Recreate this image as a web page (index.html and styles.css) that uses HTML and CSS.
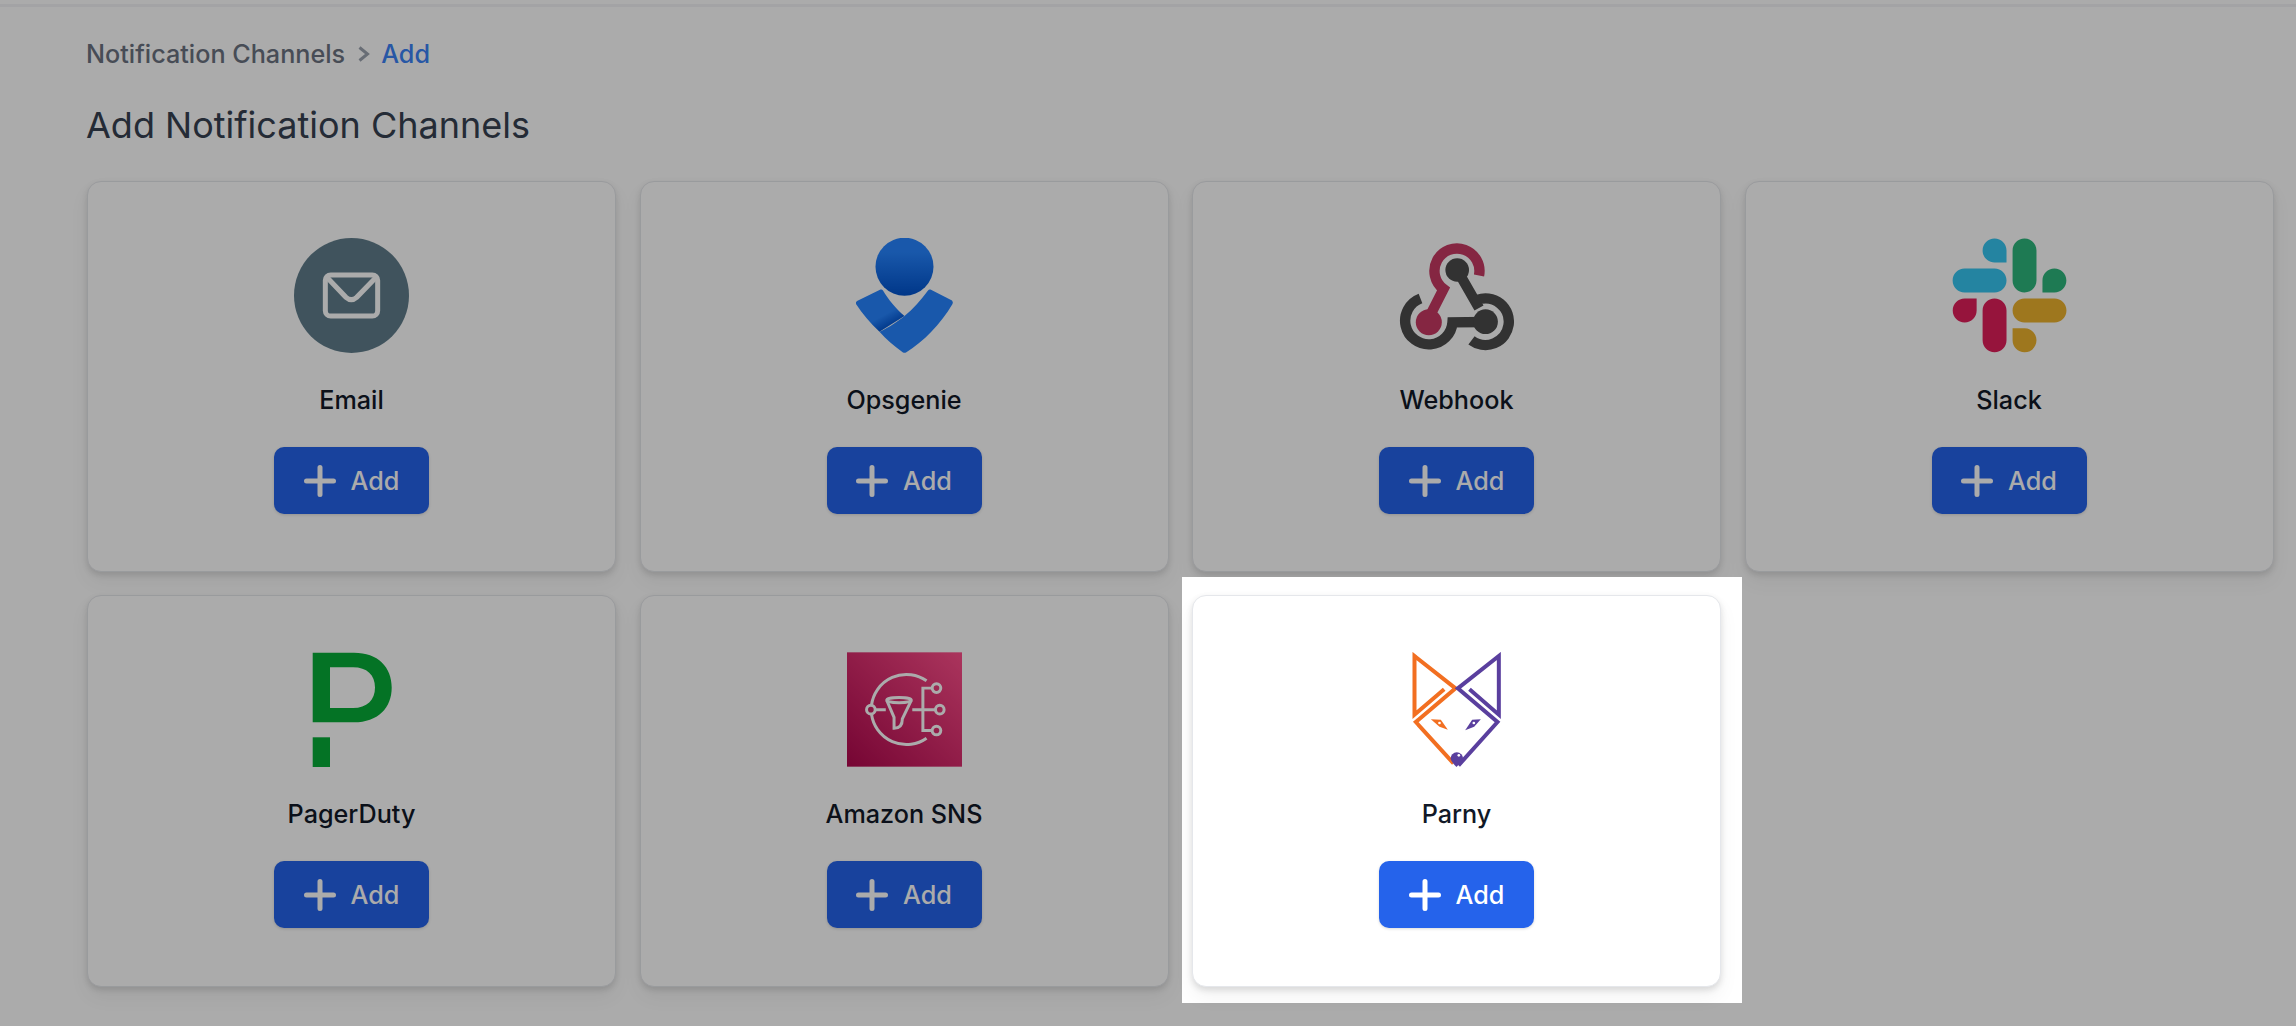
FILE: index.html
```html
<!DOCTYPE html>
<html lang="en">
<head>
    <meta charset="UTF-8">
    <meta name="viewport" content="width=device-width, initial-scale=1.0">
    <title>Add Notification Channels</title>
    <link rel="stylesheet" href="styles.css">
</head>
<body>

    <div class="topline"></div>

    <div class="content">
        <div class="breadcrumb">
            <span>Notification Channels</span>
            <svg class="crumb-arrow" viewBox="0 0 13 16"><path d="M2.5 1.5 L10.5 8 L2.5 14.5"/></svg>
            <span class="crumb-current">Add</span>
        </div>

        <h1>Add Notification Channels</h1>

        <div class="channel-grid">

            <!-- Email -->
            <div class="card">
                <svg class="channel-icon" viewBox="162 84 345 345">
                    <circle cx="334.5" cy="256.5" r="172.5" fill="#607d8b"/>
                    <rect x="256" y="195" width="157" height="123" rx="16" fill="none" stroke="#fff" stroke-width="15"/>
                    <path d="M262 203 L318 262 Q334 276 350 262 L407 203" fill="none" stroke="#fff" stroke-width="15"/>
                </svg>
                <div class="channel-name">Email</div>
                <button class="add-btn"><svg class="plus" viewBox="0 0 32 32"><path d="M16 2.5 V29.5 M2.5 16 H29.5"/></svg>Add</button>
            </div>

            <!-- Opsgenie -->
            <div class="card">
                <svg class="channel-icon" viewBox="0 0 115 115">
                    <defs>
                        <linearGradient id="opsTop" x1="0" y1="0" x2="0" y2="1">
                            <stop offset="0" stop-color="#2684ff"/>
                            <stop offset="0.25" stop-color="#2684ff"/>
                            <stop offset="1" stop-color="#0052cc"/>
                        </linearGradient>
                        <linearGradient id="opsWing" gradientUnits="userSpaceOnUse" x1="30" y1="68" x2="42" y2="90">
                            <stop offset="0" stop-color="#2684ff"/>
                            <stop offset="0.45" stop-color="#2684ff"/>
                            <stop offset="1" stop-color="#0052cc"/>
                        </linearGradient>
                    </defs>
                    <circle cx="57.5" cy="28.7" r="29" fill="url(#opsTop)"/>
                    <path d="M33.5 51.5 Q35 51 36 52.5 C41 61 49 71 57.5 78 L32.5 93.7 C23 85 15 75 9 66 Q8.5 64 10 63 Z" fill="url(#opsWing)"/>
                    <path d="M81 52.5 Q82 51 83.5 51.5 L105 62.5 Q106.5 64 105.5 66 C93 87 77 103 59 114.5 Q57.5 115 56 114.5 C47 108 39 101 32.5 93.7 C43 89 50 84 57.5 78 C66 71 74 62 81 52.5 Z" fill="#2684ff"/>
                </svg>
                <div class="channel-name">Opsgenie</div>
                <button class="add-btn"><svg class="plus" viewBox="0 0 32 32"><path d="M16 2.5 V29.5 M2.5 16 H29.5"/></svg>Add</button>
            </div>

            <!-- Webhook -->
            <div class="card">
                <svg class="channel-icon" viewBox="0 0 115 115">
                    <g fill="none" stroke-width="10.4">
                        <path d="M80 37.5 A22.5 22.5 0 1 0 44.5 51 L29.8 80" stroke="#c73a63"/>
                        <path d="M58.2 32 L80 70 M78.5 61.8 A23.3 23.3 0 1 1 72.5 102.3" stroke="#4b4b4b"/>
                        <path d="M21.5 60.5 A23.7 23.7 0 1 0 53.5 84.3 L86.5 84" stroke="#4b4b4b"/>
                    </g>
                    <circle cx="29.8" cy="84.3" r="13" fill="#c73a63"/>
                    <circle cx="58.2" cy="32" r="11.8" fill="#4b4b4b"/>
                    <circle cx="86.5" cy="83.7" r="12.4" fill="#4b4b4b"/>
                </svg>
                <div class="channel-name">Webhook</div>
                <button class="add-btn"><svg class="plus" viewBox="0 0 32 32"><path d="M16 2.5 V29.5 M2.5 16 H29.5"/></svg>Add</button>
            </div>

            <!-- Slack -->
            <div class="card">
                <svg class="channel-icon" viewBox="0 0 127 127">
                    <path d="M27.2 80c0 7.3-5.9 13.2-13.2 13.2C6.7 93.2.8 87.3.8 80c0-7.3 5.9-13.2 13.2-13.2h13.2V80zm6.6 0c0-7.3 5.9-13.2 13.2-13.2 7.3 0 13.2 5.9 13.2 13.2v33c0 7.3-5.9 13.2-13.2 13.2-7.3 0-13.2-5.9-13.2-13.2V80z" fill="#e01e5a"/>
                    <path d="M47 27c-7.3 0-13.2-5.9-13.2-13.2C33.8 6.5 39.7.6 47 .6c7.3 0 13.2 5.9 13.2 13.2V27H47zm0 6.7c7.3 0 13.2 5.9 13.2 13.2 0 7.3-5.9 13.2-13.2 13.2H13.9C6.6 60.1.7 54.2.7 46.9c0-7.3 5.9-13.2 13.2-13.2H47z" fill="#36c5f0"/>
                    <path d="M99.9 46.9c0-7.3 5.9-13.2 13.2-13.2 7.3 0 13.2 5.9 13.2 13.2 0 7.3-5.9 13.2-13.2 13.2H99.9V46.9zm-6.6 0c0 7.3-5.9 13.2-13.2 13.2-7.3 0-13.2-5.9-13.2-13.2V13.8C66.9 6.5 72.8.6 80.1.6c7.3 0 13.2 5.9 13.2 13.2v33.1z" fill="#2eb67d"/>
                    <path d="M80.1 99.8c7.3 0 13.2 5.9 13.2 13.2 0 7.3-5.9 13.2-13.2 13.2-7.3 0-13.2-5.9-13.2-13.2V99.8h13.2zm0-6.6c-7.3 0-13.2-5.9-13.2-13.2 0-7.3 5.9-13.2 13.2-13.2h33.1c7.3 0 13.2 5.9 13.2 13.2 0 7.3-5.9 13.2-13.2 13.2H80.1z" fill="#ecb22e"/>
                </svg>
                <div class="channel-name">Slack</div>
                <button class="add-btn"><svg class="plus" viewBox="0 0 32 32"><path d="M16 2.5 V29.5 M2.5 16 H29.5"/></svg>Add</button>
            </div>

            <!-- PagerDuty -->
            <div class="card">
                <svg class="channel-icon" viewBox="0 0 115 115">
                    <path fill-rule="evenodd" fill="#06ac38" d="M18.7 .7 H60 C84 .7 97.7 15 97.7 35.5 C97.7 56 84 70.3 60 70.3 H18.7 Z M36 15.3 V56 H59 C73 56 81 48 81 35.5 C81 23 73 15.3 59 15.3 Z"/>
                    <rect x="18.7" y="85.3" width="17.3" height="30" fill="#06ac38"/>
                </svg>
                <div class="channel-name">PagerDuty</div>
                <button class="add-btn"><svg class="plus" viewBox="0 0 32 32"><path d="M16 2.5 V29.5 M2.5 16 H29.5"/></svg>Add</button>
            </div>

            <!-- Amazon SNS -->
            <div class="card">
                <svg class="channel-icon" viewBox="48 39 347 345">
                    <defs>
                        <linearGradient id="snsBg" x1="0" y1="1" x2="1" y2="0">
                            <stop offset="0" stop-color="#b0084d"/>
                            <stop offset="1" stop-color="#ff4f8b"/>
                        </linearGradient>
                    </defs>
                    <rect x="48" y="39" width="347" height="345" fill="url(#snsBg)"/>
                    <g fill="none" stroke="#fff" stroke-width="9">
                        <path d="M288 125 A106 106 0 0 0 122 198 M122 226 A106 106 0 0 0 288 298"/>
                        <circle cx="120" cy="212" r="13"/>
                        <path d="M134 212 H165 M245 212 H314"/>
                        <ellipse cx="205" cy="183" rx="37" ry="8"/>
                        <path d="M168 184 L190 235 V268 Q215 268 215 240 L242 184"/>
                        <path d="M305 147 H277 V275 H305"/>
                        <circle cx="318" cy="147" r="13"/>
                        <circle cx="328" cy="212" r="13"/>
                        <circle cx="318" cy="275" r="13"/>
                    </g>
                </svg>
                <div class="channel-name">Amazon SNS</div>
                <button class="add-btn"><svg class="plus" viewBox="0 0 32 32"><path d="M16 2.5 V29.5 M2.5 16 H29.5"/></svg>Add</button>
            </div>

            <!-- Parny (highlighted, sits above the overlay) -->
            <div class="spotlight">
                <div class="card">
                    <svg class="channel-icon" viewBox="26.5 38 345 345">
                        <g fill="none" stroke-width="12">
                            <path d="M162 150 L73 226 V50 L196 147 L77 248 L190 372" stroke="#f26f21"/>
                            <path d="M238 150 L326 226 V50 L203 147 L322 248 L205 378" stroke="#5a3f9e"/>
                        </g>
                        <path d="M122 240 L152 241 L173 271 L148 262 Z" fill="#f26f21"/>
                        <circle cx="148" cy="251" r="4" fill="#fff"/>
                        <path d="M272 240 L246 241 L225 273 L252 262 Z" fill="#5a3f9e"/>
                        <circle cx="251" cy="251" r="4" fill="#fff"/>
                        <path d="M181 358 A19 19 0 0 1 219 358 Q215 366 199 383 Q184 368 181 358 Z" fill="#5a3f9e"/>
                        <circle cx="206" cy="348" r="4" fill="#fff"/>
                    </svg>
                    <div class="channel-name">Parny</div>
                    <button class="add-btn"><svg class="plus" viewBox="0 0 32 32"><path d="M16 2.5 V29.5 M2.5 16 H29.5"/></svg>Add</button>
                </div>
            </div>

        </div>
    </div>

    <div class="overlay"></div>

</body>
</html>
```

FILE: styles.css
```css
* {
    margin: 0;
    padding: 0;
    box-sizing: border-box;
}
body {
    background: #fff;
    color: #111827;
    font-family: Inter, "Liberation Sans", sans-serif;
    height: 1026px;
    overflow: hidden;
}
.topline {
    height: 7px;
    border-bottom: 3px solid #f3f4f6;
}
.content {
    padding: 29px 22.5px 0 86px;
}
.breadcrumb {
    display: flex;
    align-items: center;
    gap: 11.5px;
    font-size: 25.2px;
    line-height: 36px;
    font-weight: 500;
    color: #6b7280;
}
.crumb-arrow {
    width: 13px;
    height: 16px;
    fill: none;
    stroke: #9ca3af;
    stroke-width: 3;
}
.crumb-current {
    color: #3b82f6;
}
h1 {
    margin-top: 26px;
    font-size: 36px;
    line-height: 54px;
    font-weight: 400;
    color: #374151;
}
.channel-grid {
    display: grid;
    grid-template-columns: repeat(4, 1fr);
    grid-template-rows: 391px 392px;
    column-gap: 23.5px;
    row-gap: 23px;
    margin: 29px 0 0 1px;
}
.card {
    display: flex;
    flex-direction: column;
    align-items: center;
    height: 100%;
    padding-top: 56px;
    background: #fff;
    border: 1.5px solid #e5e7eb;
    border-radius: 14px;
    box-shadow: 0 3px 6px rgba(0, 0, 0, 0.12), 0 10px 20px rgba(0, 0, 0, 0.05);
}
.channel-icon {
    display: block;
    width: 115px;
    height: 115px;
}
.channel-name {
    margin-top: 29px;
    font-size: 25.2px;
    line-height: 36px;
    font-weight: 500;
    color: #111827;
}
.add-btn {
    display: inline-flex;
    align-items: center;
    justify-content: center;
    gap: 15px;
    width: 155px;
    height: 67px;
    margin-top: 29px;
    background: #2563eb;
    color: #fff;
    border: none;
    border-radius: 10px;
    font-family: inherit;
    font-size: 25.2px;
    font-weight: 500;
    box-shadow: 0 1px 3px rgba(0, 0, 0, 0.15);
}
.plus {
    width: 32px;
    height: 32px;
    fill: none;
    stroke: currentColor;
    stroke-width: 5;
    stroke-linecap: round;
}
.overlay {
    position: fixed;
    inset: 0;
    z-index: 10;
    background: rgba(0, 0, 0, 0.33);
}
.spotlight {
    position: relative;
    z-index: 20;
}
.spotlight::before {
    content: "";
    position: absolute;
    top: -18px;
    bottom: -16px;
    left: -10px;
    right: -21px;
    z-index: -1;
    background: #fff;
}
```
